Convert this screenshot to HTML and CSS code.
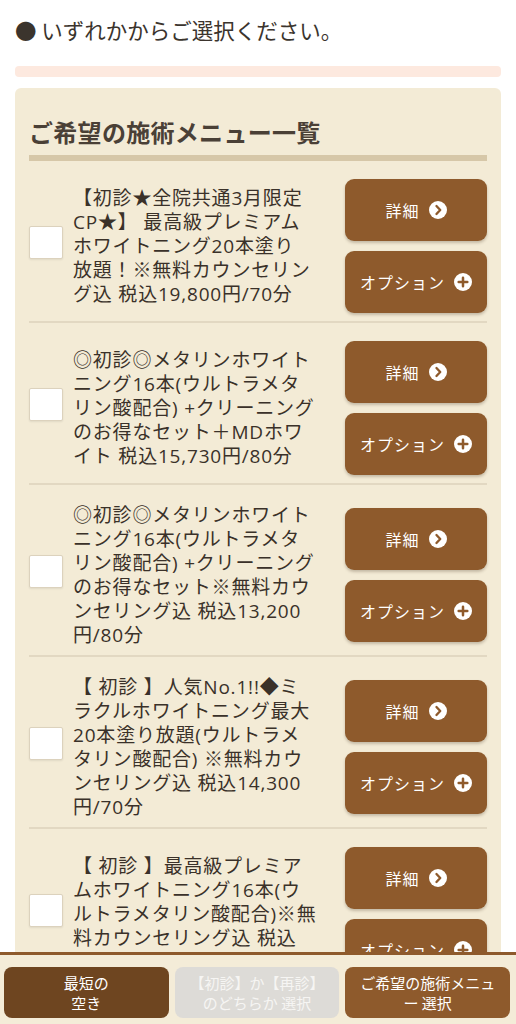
FILE: index.html
```html
<!DOCTYPE html>
<html lang="ja">
<head>
<meta charset="utf-8">
<title>メニュー選択</title>
<link rel="stylesheet" href="styles.css">
</head>
<body>
<div class="page">
  <p class="lead">● いずれかからご選択ください。</p>
  <div class="pinkbar"></div>
  <section class="card">
    <h2 class="card-title">ご希望の施術メニュー一覧</h2>
    <div class="rule"></div>

    <div class="row">
      <span class="check"></span>
      <p class="desc">【初診★全院共通3月限定<br>CP★】 最高級プレミアム<br>ホワイトニング20本塗り<br>放題！※無料カウンセリン<br>グ込 税込19,800円/70分</p>
      <div class="btns">
        <button class="btn">詳細<svg class="ico" viewBox="0 0 20 20"><circle cx="10" cy="10" r="10" fill="#fff"/><path d="M8.3 5.6 L12.5 10 L8.3 14.4" fill="none" stroke="#8e5a2c" stroke-width="2.6" stroke-linecap="round" stroke-linejoin="round"/></svg></button>
        <button class="btn">オプション<svg class="ico" viewBox="0 0 20 20"><circle cx="10" cy="10" r="10" fill="#fff"/><path d="M10 5.2 V14.8 M5.2 10 H14.8" fill="none" stroke="#8e5a2c" stroke-width="2.8" stroke-linecap="round"/></svg></button>
      </div>
    </div>

    <div class="row">
      <span class="check"></span>
      <p class="desc">◎初診◎メタリンホワイト<br>ニング16本(ウルトラメタ<br>リン酸配合) +クリーニング<br>のお得なセット＋MDホワ<br>イト 税込15,730円/80分</p>
      <div class="btns">
        <button class="btn">詳細<svg class="ico" viewBox="0 0 20 20"><circle cx="10" cy="10" r="10" fill="#fff"/><path d="M8.3 5.6 L12.5 10 L8.3 14.4" fill="none" stroke="#8e5a2c" stroke-width="2.6" stroke-linecap="round" stroke-linejoin="round"/></svg></button>
        <button class="btn">オプション<svg class="ico" viewBox="0 0 20 20"><circle cx="10" cy="10" r="10" fill="#fff"/><path d="M10 5.2 V14.8 M5.2 10 H14.8" fill="none" stroke="#8e5a2c" stroke-width="2.8" stroke-linecap="round"/></svg></button>
      </div>
    </div>

    <div class="row">
      <span class="check"></span>
      <p class="desc">◎初診◎メタリンホワイト<br>ニング16本(ウルトラメタ<br>リン酸配合) +クリーニング<br>のお得なセット※無料カウ<br>ンセリング込 税込13,200<br>円/80分</p>
      <div class="btns">
        <button class="btn">詳細<svg class="ico" viewBox="0 0 20 20"><circle cx="10" cy="10" r="10" fill="#fff"/><path d="M8.3 5.6 L12.5 10 L8.3 14.4" fill="none" stroke="#8e5a2c" stroke-width="2.6" stroke-linecap="round" stroke-linejoin="round"/></svg></button>
        <button class="btn">オプション<svg class="ico" viewBox="0 0 20 20"><circle cx="10" cy="10" r="10" fill="#fff"/><path d="M10 5.2 V14.8 M5.2 10 H14.8" fill="none" stroke="#8e5a2c" stroke-width="2.8" stroke-linecap="round"/></svg></button>
      </div>
    </div>

    <div class="row">
      <span class="check"></span>
      <p class="desc">【 初診 】人気No.1!!◆ミ<br>ラクルホワイトニング最大<br>20本塗り放題(ウルトラメ<br>タリン酸配合) ※無料カウ<br>ンセリング込 税込14,300<br>円/70分</p>
      <div class="btns">
        <button class="btn">詳細<svg class="ico" viewBox="0 0 20 20"><circle cx="10" cy="10" r="10" fill="#fff"/><path d="M8.3 5.6 L12.5 10 L8.3 14.4" fill="none" stroke="#8e5a2c" stroke-width="2.6" stroke-linecap="round" stroke-linejoin="round"/></svg></button>
        <button class="btn">オプション<svg class="ico" viewBox="0 0 20 20"><circle cx="10" cy="10" r="10" fill="#fff"/><path d="M10 5.2 V14.8 M5.2 10 H14.8" fill="none" stroke="#8e5a2c" stroke-width="2.8" stroke-linecap="round"/></svg></button>
      </div>
    </div>

    <div class="row">
      <span class="check"></span>
      <p class="desc">【 初診 】最高級プレミア<br>ムホワイトニング16本(ウ<br>ルトラメタリン酸配合)※無<br>料カウンセリング込 税込<br>16,500円/70分</p>
      <div class="btns">
        <button class="btn">詳細<svg class="ico" viewBox="0 0 20 20"><circle cx="10" cy="10" r="10" fill="#fff"/><path d="M8.3 5.6 L12.5 10 L8.3 14.4" fill="none" stroke="#8e5a2c" stroke-width="2.6" stroke-linecap="round" stroke-linejoin="round"/></svg></button>
        <button class="btn">オプション<svg class="ico" viewBox="0 0 20 20"><circle cx="10" cy="10" r="10" fill="#fff"/><path d="M10 5.2 V14.8 M5.2 10 H14.8" fill="none" stroke="#8e5a2c" stroke-width="2.8" stroke-linecap="round"/></svg></button>
      </div>
    </div>
  </section>
</div>

<nav class="bottombar">
  <button class="tab tab-dark">最短の<br>空き</button>
  <button class="tab tab-grey">【初診】か【再診】<br>のどちらか 選択</button>
  <button class="tab tab-brown">ご希望の施術メニュ<br>ー 選択</button>
</nav>
</body>
</html>
```

FILE: styles.css
```css
* { box-sizing: border-box; }

html, body {
  margin: 0;
  padding: 0;
  background: #ffffff;
}

body {
  font-family: "Open Sans", "Noto Sans CJK JP", sans-serif;
  color: #3a3129;
}

.page {
  padding: 16px 15px 120px;
}

.lead {
  margin: 0;
  font-size: 21.5px;
  line-height: 28px;
  color: #3b342d;
  font-family: "Noto Sans CJK JP", sans-serif;
}

.pinkbar {
  margin-top: 22px;
  height: 11px;
  border-radius: 4px;
  background: #fde9df;
}

.card {
  margin-top: 11px;
  background: #f3ebd6;
  border-radius: 6px 6px 0 0;
  padding: 28px 14px 0;
}

.card-title {
  margin: 0;
  font-family: "Noto Sans CJK JP", sans-serif;
  font-size: 24px;
  letter-spacing: 0.3px;
  line-height: 32px;
  font-weight: 700;
  color: #4a4036;
}

.rule {
  margin-top: 7px;
  height: 6px;
  background: #d6c7a8;
}

.row {
  display: flex;
  align-items: center;
  padding: 18px 0 8px;
  border-bottom: 2px solid #e2d8c2;
}

.check {
  flex: 0 0 34px;
  height: 33px;
  background: #ffffff;
  border: 1px solid #dcd2bd;
  border-radius: 2px;
  box-shadow: 0 1px 2px rgba(0, 0, 0, 0.08);
  margin-bottom: 7px;
}

.desc {
  flex: 1;
  margin: 0 0 0 10px;
  font-size: 19px;
  letter-spacing: 0.8px;
  line-height: 24px;
  white-space: nowrap;
  color: #3a3129;
}

.btns {
  flex: 0 0 142px;
  display: flex;
  flex-direction: column;
  gap: 10px;
}

.btn {
  height: 62px;
  border: none;
  border-radius: 9px;
  background: #8e5a2c;
  color: #ffffff;
  font-family: "Noto Sans CJK JP", sans-serif;
  font-size: 16px;
  letter-spacing: 1px;
  display: flex;
  align-items: center;
  justify-content: center;
  gap: 9px;
  box-shadow: 0 2px 3px rgba(60, 40, 20, 0.25);
  padding: 0;
}

.ico {
  width: 18px;
  height: 18px;
  flex: 0 0 18px;
}

.bottombar {
  position: fixed;
  left: 0;
  right: 0;
  bottom: 0;
  height: 72px;
  background: #f4ecd8;
  border-top: 3px solid #8e5a2c;
  display: grid;
  grid-template-columns: 1fr 1fr 1fr;
  gap: 6px;
  padding: 12px 6px 6px 4px;
}

.tab {
  border: none;
  border-radius: 8px;
  font-family: "Noto Sans CJK JP", sans-serif;
  font-size: 15px;
  line-height: 20px;
  color: #ffffff;
  padding: 0;
  text-align: center;
}

.tab-dark { background: #6e4520; }
.tab-grey { background: #dddbd7; color: #f6f5f3; }
.tab-brown { background: #8e5a2c; }
```
